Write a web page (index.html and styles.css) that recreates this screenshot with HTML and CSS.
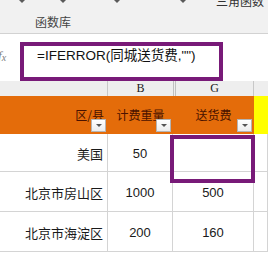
FILE: index.html
```html
<!DOCTYPE html>
<html lang="zh-CN">
<head>
<meta charset="utf-8">
<title>公式</title>
<link rel="stylesheet" href="styles.css">
</head>
<body>
<div class="ribbon">
  <div class="ribbon-top">
    <span class="tri t1"></span>
    <span class="tri t2"></span>
    <span class="tri t3"></span>
    <span class="tri t4"></span>
    <span class="btn-label">三角函数</span>
  </div>
  <div class="group-label">函数库</div>
</div>
<div class="fbar">
  <span class="fx">f<span class="fx-x">x</span></span>
  <div class="formula">=IFERROR(同城送货费,"")</div>
</div>
<div class="sheet">
  <div class="colhead ca"></div>
  <div class="colhead cb">B</div>
  <div class="colhead cg">G</div>
  <div class="colhead ch"></div>

  <div class="hdr right">区/县<span class="dd"></span></div>
  <div class="hdr">计费重量<span class="dd"></span></div>
  <div class="hdr">送货费<span class="dd"></span></div>
  <div class="hdr yellow"></div>

  <div class="cell right">美国</div>
  <div class="cell num">50</div>
  <div class="cell num mark-host"><span class="mark"></span></div>
  <div class="cell"></div>

  <div class="cell right">北京市房山区</div>
  <div class="cell num">1000</div>
  <div class="cell num">500</div>
  <div class="cell"></div>

  <div class="cell right">北京市海淀区</div>
  <div class="cell num">200</div>
  <div class="cell num">160</div>
  <div class="cell"></div>
</div>
</body>
</html>
```

FILE: styles.css
```css
html, body {
  margin: 0;
  padding: 0;
  background: #ffffff;
  overflow: hidden;
}
body {
  width: 268px;
  height: 253px;
  font-family: "Liberation Sans", "Noto Sans CJK SC", sans-serif;
}

/* ribbon */
.ribbon {
  height: 33px;
  background: #f1f1f1;
  border-bottom: 1px solid #d2d2d2;
  overflow: hidden;
}
.ribbon-top {
  display: flex;
  align-items: flex-start;
  height: 10px;
  overflow: hidden;
}
.tri {
  width: 0;
  height: 0;
  border-left: 3px solid transparent;
  border-right: 3px solid transparent;
  border-top: 3px solid #5a5a5a;
}
.t1 { margin-left: 19px; }
.t2 { margin-left: 35px; }
.t3 { margin-left: 48px; }
.t4 { margin-left: 60px; }
.btn-label {
  margin-left: 30px;
  margin-top: -5px;
  font-family: "Noto Sans CJK SC", sans-serif;
  font-size: 12px;
  line-height: 12px;
  color: #333;
  white-space: nowrap;
}
.group-label {
  margin: 5px 0 0 35px;
  font-family: "Noto Sans CJK SC", sans-serif;
  font-size: 12px;
  line-height: 14px;
  color: #444;
}

/* formula bar */
.fbar {
  display: flex;
  align-items: flex-start;
  height: 47px;
  background: #ffffff;
}
.fx {
  width: 20px;
  margin-left: -2px;
  padding-top: 15px;
  font-family: "Liberation Serif", serif;
  font-style: italic;
  font-size: 13px;
  line-height: 14px;
  color: #7c7c7c;
}
.fx-x {
  font-size: 10px;
  position: relative;
  top: 1px;
}
.formula {
  box-sizing: border-box;
  margin: 8px 0 0 2px;
  width: 203px;
  height: 39px;
  border: 4px solid #781a78;
  padding: 0 0 0 13px;
  font-family: "Liberation Sans", "Noto Sans CJK SC", sans-serif;
  font-size: 13.5px;
  line-height: 20px;
  color: #111;
  white-space: nowrap;
}

/* sheet */
.sheet {
  display: grid;
  grid-template-columns: 108px 65px 81px 14px;
  grid-template-rows: 15px 38px 38px 40px 40px;
}
.colhead {
  box-sizing: border-box;
  background: #eeeeee;
  border-right: 1px solid #c8c8c8;
  font-family: "Liberation Serif", serif;
  font-size: 12px;
  line-height: 15px;
  text-align: center;
  color: #222;
}
.colhead.cb { border-right: none; }
.colhead.cg { border-left: 3px double #c0c0c0; }
.colhead.ch { border-right: none; }

.hdr {
  position: relative;
  box-sizing: border-box;
  background: #e46c0a;
  display: flex;
  align-items: center;
  justify-content: center;
  padding-bottom: 1px;
  font-family: "Noto Sans CJK SC", sans-serif;
  font-size: 12px;
  color: #4a1200;
  white-space: nowrap;
}
.hdr.right {
  justify-content: flex-end;
  padding-right: 4px;
}
.hdr.yellow { background: #ffff00; }
.dd {
  position: absolute;
  right: 2px;
  bottom: 2px;
  box-sizing: border-box;
  width: 15px;
  height: 13px;
  background: linear-gradient(#ffffff, #ececec);
  border: 1px solid #b4b4b4;
}
.dd::after {
  content: "";
  position: absolute;
  left: 4px;
  top: 4px;
  width: 0;
  height: 0;
  border-left: 3px solid transparent;
  border-right: 3px solid transparent;
  border-top: 3px solid #555;
}

.cell {
  box-sizing: border-box;
  border-right: 1px solid #d4d4d4;
  border-bottom: 1px solid #d4d4d4;
  display: flex;
  align-items: center;
  justify-content: center;
  padding-top: 1px;
  font-family: "Noto Sans CJK SC", sans-serif;
  font-size: 13px;
  color: #1a1a1a;
  white-space: nowrap;
}
.cell.right {
  justify-content: flex-end;
  padding-right: 4px;
}
.cell.num {
  font-family: "Liberation Sans", sans-serif;
  font-size: 13px;
}
.mark-host { position: relative; }
.mark {
  position: absolute;
  left: -3px;
  top: 1px;
  box-sizing: border-box;
  width: 85px;
  height: 48px;
  border: 4px solid #781a78;
  z-index: 2;
}
```
